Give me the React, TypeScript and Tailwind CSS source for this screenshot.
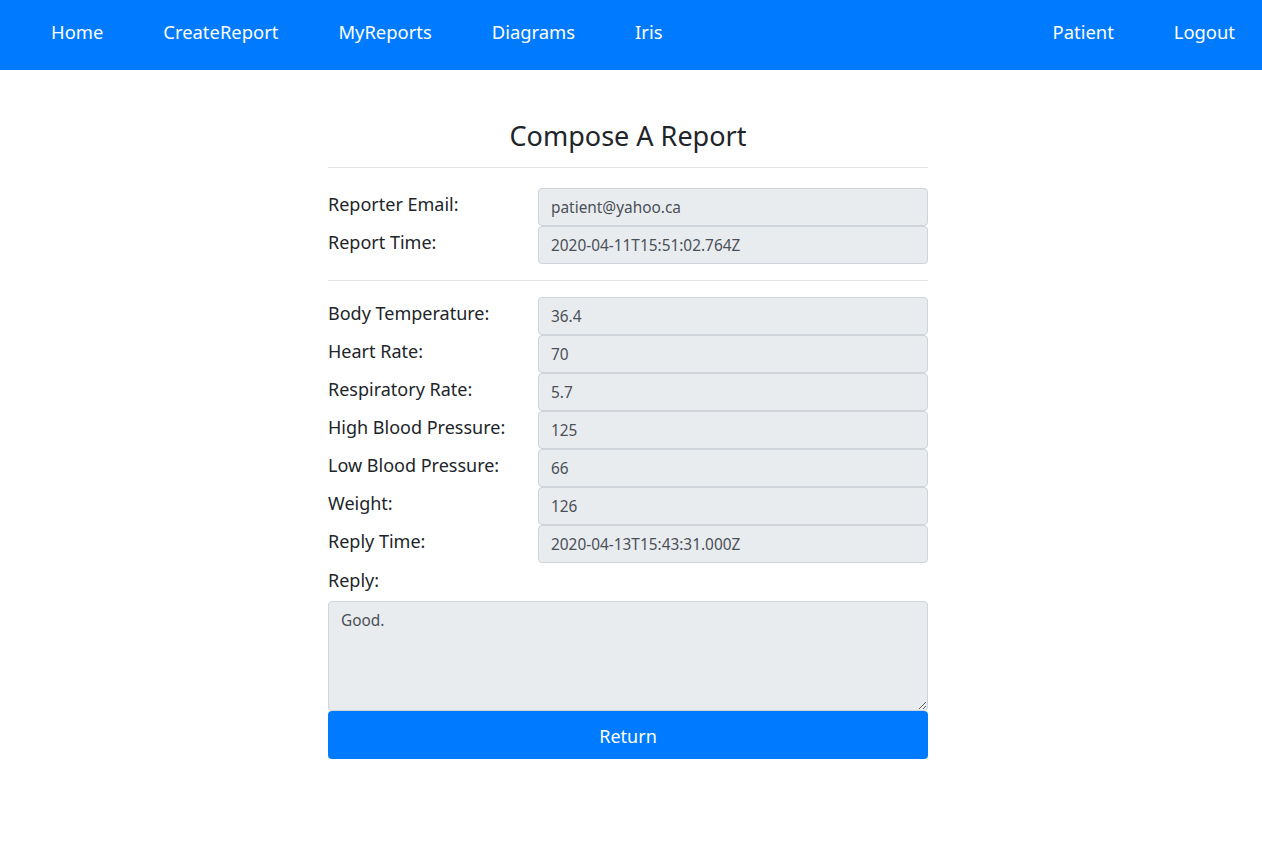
import React from 'react'

// ── Data ──────────────────────────────────────────────────────────────────────
const leftLinks = ['Home', 'CreateReport', 'MyReports', 'Diagrams', 'Iris']
const rightLinks = ['Patient', 'Logout']

const headerFields = [
  { label: 'Reporter Email:', value: 'patient@yahoo.ca' },
  { label: 'Report Time:', value: '2020-04-11T15:51:02.764Z' },
]

const vitals = [
  { label: 'Body Temperature:', value: '36.4' },
  { label: 'Heart Rate:', value: '70' },
  { label: 'Respiratory Rate:', value: '5.7' },
  { label: 'High Blood Pressure:', value: '125' },
  { label: 'Low Blood Pressure:', value: '66' },
  { label: 'Weight:', value: '126' },
  { label: 'Reply Time:', value: '2020-04-13T15:43:31.000Z' },
]

const font = { fontFamily: '"Noto Sans", "Open Sans", sans-serif' }

// ── Field row ─────────────────────────────────────────────────────────────────
const Field = ({ label, value }: { label: string; value: string }) => (
  <div className="flex flex-row">
    <label className="w-[210px] shrink-0 text-[18px] leading-[32px] text-[#212529]">{label}</label>
    <input
      readOnly
      value={value}
      className="w-[390px] h-[38px] px-3 pt-[1px] text-[15.4px] text-[#495057] bg-[#e9ecef] border border-[#ced4da] rounded-[4px] outline-none"
    />
  </div>
)

// ── App ───────────────────────────────────────────────────────────────────────
const App = () => {
  return (
    <div className="min-h-screen bg-white" style={font}>
      {/* Navbar */}
      <nav className="h-[70px] bg-[#007bff] flex flex-row items-center justify-between pl-[21px] pb-[6px]">
        <div className="flex flex-row">
          {leftLinks.map(l => (
            <a key={l} className="px-[30px] text-[18.4px] text-white cursor-pointer">{l}</a>
          ))}
        </div>
        <div className="flex flex-row">
          {rightLinks.map(l => (
            <a key={l} className="px-[30px] text-[18.4px] text-white cursor-pointer last:pr-[27px]">{l}</a>
          ))}
        </div>
      </nav>

      {/* Form */}
      <div className="flex justify-center pr-[6px]">
        <div className="w-[600px] mt-[49px]">
          <h3 className="text-center text-[27px] leading-[34px] text-[#212529]">Compose A Report</h3>
          <hr className="mt-[14px] mb-[20px] border-t border-[#e3e3e3]" />

          {headerFields.map(f => <Field key={f.label} {...f} />)}

          <hr className="mt-[16px] mb-[16px] border-t border-[#e3e3e3]" />

          {vitals.map(f => <Field key={f.label} {...f} />)}

          <div className="text-[18px] leading-[30px] text-[#212529] mt-[2px] mb-[6px]">Reply:</div>
          <textarea
            readOnly
            value="Good."
            className="block w-[600px] h-[110px] px-3 pt-[7px] text-[15.4px] text-[#495057] bg-[#e9ecef] border border-[#ced4da] rounded-[4px] outline-none resize-y"
          />
          <button className="w-[600px] h-[48px] pt-[2px] bg-[#007bff] text-white text-[18px] rounded-[4px]">
            Return
          </button>
        </div>
      </div>
    </div>
  )
}

export default App
